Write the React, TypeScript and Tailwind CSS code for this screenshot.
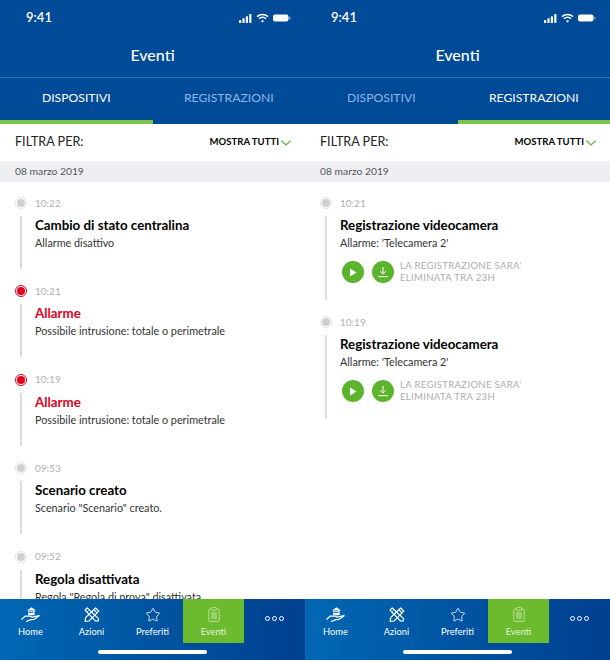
import { Star } from "lucide-react";

type EventItem = {
  time: string;
  title: string;
  sub: string;
  alarm?: boolean;
  recording?: boolean;
};

const deviceEvents: EventItem[] = [
  { time: "10:22", title: "Cambio di stato centralina", sub: "Allarme disattivo" },
  { time: "10:21", title: "Allarme", sub: "Possibile intrusione: totale o perimetrale", alarm: true },
  { time: "10:19", title: "Allarme", sub: "Possibile intrusione: totale o perimetrale", alarm: true },
  { time: "09:53", title: "Scenario creato", sub: 'Scenario "Scenario" creato.' },
  { time: "09:52", title: "Regola disattivata", sub: 'Regola "Regola di prova" disattivata' },
];

const recordingEvents: EventItem[] = [
  { time: "10:21", title: "Registrazione videocamera", sub: "Allarme: 'Telecamera 2'", recording: true },
  { time: "10:19", title: "Registrazione videocamera", sub: "Allarme: 'Telecamera 2'", recording: true },
];

function StatusBar() {
  return (
    <div className="flex h-[36px] items-center justify-between pl-[26px] pr-[14px]">
      <span className="text-[13px] font-semibold text-white">9:41</span>
      <div className="flex items-center gap-[4px]">
        <svg width="13" height="9" viewBox="0 0 13 9" fill="white">
          <rect x="0" y="6" width="2.2" height="3" rx="0.5" />
          <rect x="3.4" y="4.2" width="2.2" height="4.8" rx="0.5" />
          <rect x="6.8" y="2.2" width="2.2" height="6.8" rx="0.5" />
          <rect x="10.2" y="0" width="2.2" height="9" rx="0.5" />
        </svg>
        <svg width="13" height="10" viewBox="0 0 13 10" fill="none" stroke="white">
          <path d="M1 3.6a8 8 0 0 1 11 0" strokeWidth="1.5" />
          <path d="M3 5.8a5 5 0 0 1 7 0" strokeWidth="1.5" />
          <path d="M6.5 9.6 4.9 7.9a2.3 2.3 0 0 1 3.2 0Z" fill="white" stroke="none" />
        </svg>
        <svg width="18" height="8" viewBox="0 0 18 8" fill="white">
          <rect x="0" y="0.5" width="15.5" height="7" rx="2" />
          <rect x="16.3" y="2.7" width="1.2" height="2.6" rx="0.6" opacity="0.6" />
        </svg>
      </div>
    </div>
  );
}

function Tabs({ active }: { active: 0 | 1 }) {
  const labels = ["DISPOSITIVI", "REGISTRAZIONI"];
  return (
    <div className="flex h-[46px]">
      {labels.map((label, i) => (
        <div
          key={label}
          className={`flex w-1/2 items-center justify-center border-b-4 pb-[2px] text-[12.2px] ${
            i === active
              ? "border-[#7fc34a] text-white"
              : "border-transparent text-[#8fb8e6]"
          }`}
        >
          {label}
        </div>
      ))}
    </div>
  );
}

function FilterRow() {
  return (
    <div className="flex h-[37px] items-center justify-between pl-[15px] pr-[14px]">
      <span className="text-[12.6px] text-[#222]">FILTRA PER:</span>
      <div className="flex items-center gap-[2px]">
        <span className="text-[9.5px] font-bold tracking-[0.05px] text-black">MOSTRA TUTTI</span>
        <svg width="10" height="6" viewBox="0 0 10 6" fill="none" stroke="#5cb531" strokeWidth="1.2">
          <path d="M0.5 0.7 5 5l4.5-4.3" />
        </svg>
      </div>
    </div>
  );
}

function Dot({ alarm }: { alarm?: boolean }) {
  if (alarm) {
    return (
      <div className="flex h-[12px] w-[12px] items-center justify-center rounded-full border border-[#e2001a]">
        <div className="h-[8px] w-[8px] rounded-full bg-[#e2001a]" />
      </div>
    );
  }
  return (
    <div className="flex h-[12px] w-[12px] items-center justify-center rounded-full border border-[#e2e2e2]">
      <div className="h-[8px] w-[8px] rounded-full bg-[#cfcfcf]" />
    </div>
  );
}

function RecordingActions() {
  return (
    <div className="mt-[9px] flex items-center">
      <div className="ml-[2px] flex h-[22px] w-[22px] items-center justify-center rounded-full bg-[#5bb42c]">
        <svg width="8" height="9" viewBox="0 0 8 9" fill="white">
          <path d="M1 0.5v8l6.5-4Z" />
        </svg>
      </div>
      <div className="ml-[8px] flex h-[22px] w-[22px] items-center justify-center rounded-full bg-[#5bb42c]">
        <svg width="12" height="12" viewBox="0 0 12 12" fill="none" stroke="white" strokeWidth="1">
          <path d="M6 1v7M3 5.2 6 8l3-2.8M1 10.7h10" />
        </svg>
      </div>
      <div className="ml-[6px] text-[9.6px] leading-[12px] tracking-[0.3px] text-[#adadad]">
        <div>LA REGISTRAZIONE SARA'</div>
        <div>ELIMINATA TRA 23H</div>
      </div>
    </div>
  );
}

function EventRow({ item }: { item: EventItem }) {
  return (
    <div className={item.recording ? "h-[119px]" : "h-[88.4px]"}>
      <div className="flex h-[14px] items-center">
        <div className="ml-[15px] w-[20px]">
          <Dot alarm={item.alarm} />
        </div>
        <span className="text-[10px] text-[#b0b0b0]">{item.time}</span>
      </div>
      <div className="ml-[20px] mt-[6px] border-l-2 border-[#dcdcdc] pl-[13px]">
        <div className={`flex flex-col ${item.recording ? "h-[84px]" : "h-[53px]"}`}>
          <div className={`text-[13.3px] font-bold leading-[18px] ${item.alarm ? "text-[#e2001a]" : "text-black"}`}>
            {item.title}
          </div>
          <div className="mt-[1px] whitespace-nowrap text-[10.8px] leading-[16px] text-[#333]">{item.sub}</div>
          {item.recording && <RecordingActions />}
        </div>
      </div>
    </div>
  );
}

function HomeIcon() {
  return (
    <svg width="19" height="15" viewBox="0 0 19 15" fill="none" stroke="white" strokeWidth="1.2">
      <path d="M10.5 0.3 6 3.6h1.2v4.6h6.4V3.6H15Z" fill="white" stroke="none" />
      <path d="M7.5 3.9h5M7.5 5.5h5" stroke="#0a63b0" strokeWidth="0.8" />
      <path d="M0.5 12.5 4 9.2h5.2l2 .9 7-1.4-5 3.6-3.4.3L5 14.6" strokeLinejoin="round" />
    </svg>
  );
}

function ToolsIcon() {
  return (
    <svg width="16" height="15" viewBox="0 0 16 15" fill="none" stroke="white" strokeWidth="1.2" strokeLinejoin="round">
      <path d="M1 3.2 3.2 1l11.4 10.6-.6 2.6-2.6-.4Z" />
      <path d="M3 5 4.5 3.6M5.2 7l1.4-1.4" strokeWidth="0.8" />
      <path d="M11.6 1 14.8 4.2 5 14 1.2 14.4 1.6 10.6Z" />
      <path d="M10 2.8 13.2 6" />
    </svg>
  );
}

function ClipboardIcon() {
  return (
    <svg width="12" height="15" viewBox="0 0 12 15" fill="none" stroke="#b7e092" strokeWidth="1">
      <rect x="0.8" y="2.2" width="10.4" height="12.2" rx="0.8" />
      <rect x="3.6" y="0.6" width="4.8" height="2.8" rx="0.6" fill="#6cbb2f" />
      <rect x="3" y="5" width="6" height="7" fill="#b7e092" fillOpacity="0.6" stroke="none" />
    </svg>
  );
}

function BottomNav() {
  return (
    <div className="h-[61px] shrink-0 bg-gradient-to-r from-[#0168b4] to-[#00408f]">
      <div className="flex h-[44px]">
        <NavItem label="Home" icon={<HomeIcon />} />
        <NavItem label="Azioni" icon={<ToolsIcon />} />
        <NavItem label="Preferiti" icon={<Star size={16} strokeWidth={1.2} color="white" />} />
        <NavItem label="Eventi" icon={<ClipboardIcon />} active />
        <div className="flex w-[61px] items-center justify-center gap-[2px] pb-[6px]">
          <div className="h-[5px] w-[5px] rounded-full border border-white" />
          <div className="h-[5px] w-[5px] rounded-full border border-white" />
          <div className="h-[5px] w-[5px] rounded-full border border-white" />
        </div>
      </div>
      <div className="mx-auto mt-[7px] h-[4px] w-[109px] rounded-full bg-white" />
    </div>
  );
}

function NavItem({ label, icon, active }: { label: string; icon: React.ReactNode; active?: boolean }) {
  return (
    <div className={`flex w-[61px] flex-col items-center pt-[8px] ${active ? "bg-[#6cbb2f]" : ""}`}>
      <div className="flex h-[15px] items-center justify-center">{icon}</div>
      <span className={`mt-[3px] text-[9.3px] leading-[13px] ${active ? "text-[#e4f3d8]" : "text-white"}`}>{label}</span>
    </div>
  );
}

function Panel({ active, events }: { active: 0 | 1; events: EventItem[] }) {
  return (
    <div className="flex h-full w-[305px] flex-col bg-white">
      <div className="bg-[#004a97]">
        <StatusBar />
        <div className="flex h-[42px] items-center justify-center border-b border-[#2f6db5] pb-[3px] text-[16px] font-medium text-white">
          Eventi
        </div>
        <Tabs active={active} />
      </div>
      <FilterRow />
      <div className="flex h-[21px] items-center bg-[#eeeef3] pl-[15px] text-[10.3px] text-[#555]">08 marzo 2019</div>
      <div className="min-h-0 flex-1 overflow-hidden pt-[14px]">
        {events.map((item, i) => (
          <EventRow key={i} item={item} />
        ))}
      </div>
      <BottomNav />
    </div>
  );
}

export default function App() {
  return (
    <div className="flex h-[660px] w-[610px] overflow-hidden font-['Lato',sans-serif]">
      <Panel active={0} events={deviceEvents} />
      <Panel active={1} events={recordingEvents} />
    </div>
  );
}
